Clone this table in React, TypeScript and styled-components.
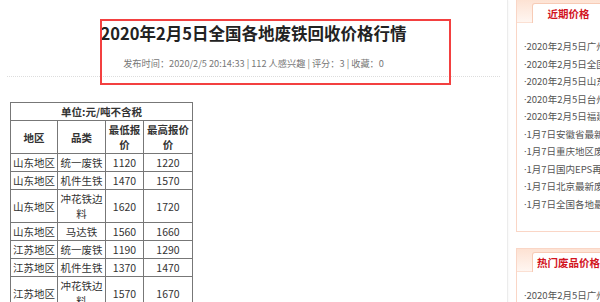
import React from "react";
import styled, { createGlobalStyle } from "styled-components";

const GlobalStyle = createGlobalStyle`
  html, body {
    margin: 0;
    padding: 0;
    background: #fff;
    overflow: hidden;
  }
  body {
    font-family: "Noto Sans CJK SC", "Noto Sans", sans-serif;
    color: #333;
  }
`;

const Page = styled.div`
  display: flex;
  align-items: flex-start;
  width: 600px;
  height: 302px;
  overflow: hidden;
`;

const Main = styled.main`
  flex: 0 0 507px;
  min-height: 302px;
  border-right: 1px solid #ececec;
  box-shadow: 1px 0 2px rgba(0, 0, 0, 0.03);
`;

const Header = styled.header`
  position: relative;
  padding-top: 21px;
`;

const Title = styled.h1`
  margin: 0;
  font-size: 16.5px;
  line-height: 24px;
  font-weight: bold;
  text-align: center;
  color: #222;
`;

const Meta = styled.div`
  margin-top: 11px;
  font-size: 9.2px;
  line-height: 14px;
  text-align: center;
  color: #777;
`;

const Divider = styled.div`
  margin: 6px 7px 0;
  border-top: 1px dotted #ddd;
`;

const Highlight = styled.div`
  position: absolute;
  left: 100px;
  top: 19px;
  width: 351px;
  height: 66px;
  box-sizing: border-box;
  border: 2px solid #f34040;
  pointer-events: none;
`;

const PriceTable = styled.table`
  margin: 25px 0 0 10px;
  width: 182px;
  table-layout: fixed;
  border-collapse: collapse;
  font-size: 10.5px;
  line-height: 15px;
  color: #333;
`;

const Cell = styled.td<{ $head?: boolean }>`
  border: 1px solid #777;
  padding: 1px 1px;
  text-align: center;
  vertical-align: middle;
  font-weight: ${(p) => (p.$head ? "bold" : "normal")};
  word-break: break-all;
`;

const Sidebar = styled.aside`
  flex: 0 0 230px;
  margin: -1px 0 0 8px;
  display: flex;
  flex-direction: column;
  gap: 16px;
`;

const Box = styled.section`
  border: 1px solid #fad6c6;
  background: #fff;
`;

const BoxHead = styled.div`
  height: 23px;
  box-sizing: border-box;
  padding: 3px 0 0 15px;
  background: linear-gradient(#fde2d3, #fff6f1);
  border-bottom: 1px solid #fbe0d3;
`;

const Tab = styled.div`
  width: 73px;
  height: 20px;
  box-sizing: border-box;
  border: 1px solid #f7cbb6;
  border-bottom: none;
  border-radius: 3px 3px 0 0;
  background: #fff;
  color: #d2141e;
  font-size: 10.5px;
  font-weight: bold;
  line-height: 19px;
  text-align: center;
  white-space: nowrap;
`;

const List = styled.ul`
  list-style: none;
  margin: 0;
  padding: 15px 0 18px 7px;
  font-size: 9.5px;
  line-height: 16.5px;
  color: #555;
`;

const Item = styled.li`
  white-space: nowrap;
  overflow: hidden;
`;

const Bullet = styled.span`
  font-family: "Noto Sans", sans-serif;
`;

const rows: [string, string, string, string][] = [
  ["山东地区", "统一废铁", "1120", "1220"],
  ["山东地区", "机件生铁", "1470", "1570"],
  ["山东地区", "冲花铁边料", "1620", "1720"],
  ["山东地区", "马达铁", "1560", "1660"],
  ["江苏地区", "统一废铁", "1190", "1290"],
  ["江苏地区", "机件生铁", "1370", "1470"],
  ["江苏地区", "冲花铁边料", "1570", "1670"],
  ["江苏地区", "马达铁", "1510", "1610"],
];

const recent = [
  "2020年2月5日广州废铁回收价格行情",
  "2020年2月5日全国各地废铁回收价格行情",
  "2020年2月5日山东废铁回收价格行情",
  "2020年2月5日台州废铁回收价格行情",
  "2020年2月5日福建废铁回收价格行情",
  "1月7日安徽省最新废铁价格",
  "1月7日重庆地区废铁价格",
  "1月7日国内EPS再生料价格",
  "1月7日北京最新废纸价格",
  "1月7日全国各地最新废铁价格",
];

const hot = [
  "2020年2月5日广州废铁回收价格行情",
  "2020年2月5日全国各地废铁回收价格行情",
  "2020年2月5日山东废铁回收价格行情",
];

export default function App() {
  return (
    <>
      <GlobalStyle />
      <Page>
        <Main>
          <Header>
            <Title>2020年2月5日全国各地废铁回收价格行情</Title>
            <Meta>
              发布时间：2020/2/5 20:14:33 | 112 人感兴趣 | 评分：3 | 收藏：0
            </Meta>
            <Divider />
            <Highlight />
          </Header>

          <PriceTable>
            <colgroup>
              <col style={{ width: 47 }} />
              <col style={{ width: 48 }} />
              <col style={{ width: 38 }} />
              <col style={{ width: 49 }} />
            </colgroup>
            <tbody>
              <tr>
                <Cell $head colSpan={4}>
                  单位:元/吨不含税
                </Cell>
              </tr>
              <tr>
                <Cell $head>地区</Cell>
                <Cell $head>品类</Cell>
                <Cell $head>最低报价</Cell>
                <Cell $head>最高报价价</Cell>
              </tr>
              {rows.map((r, i) => (
                <tr key={i}>
                  {r.map((c, j) => (
                    <Cell key={j}>{c}</Cell>
                  ))}
                </tr>
              ))}
            </tbody>
          </PriceTable>
        </Main>

        <Sidebar>
          <Box>
            <BoxHead>
              <Tab>近期价格</Tab>
            </BoxHead>
            <List>
              {recent.map((t) => (
                <Item key={t}>
                  <Bullet>·</Bullet>
                  {t}
                </Item>
              ))}
            </List>
          </Box>
          <Box>
            <BoxHead>
              <Tab>热门废品价格</Tab>
            </BoxHead>
            <List>
              {hot.map((t) => (
                <Item key={t}>
                  <Bullet>·</Bullet>
                  {t}
                </Item>
              ))}
            </List>
          </Box>
        </Sidebar>
      </Page>
    </>
  );
}
